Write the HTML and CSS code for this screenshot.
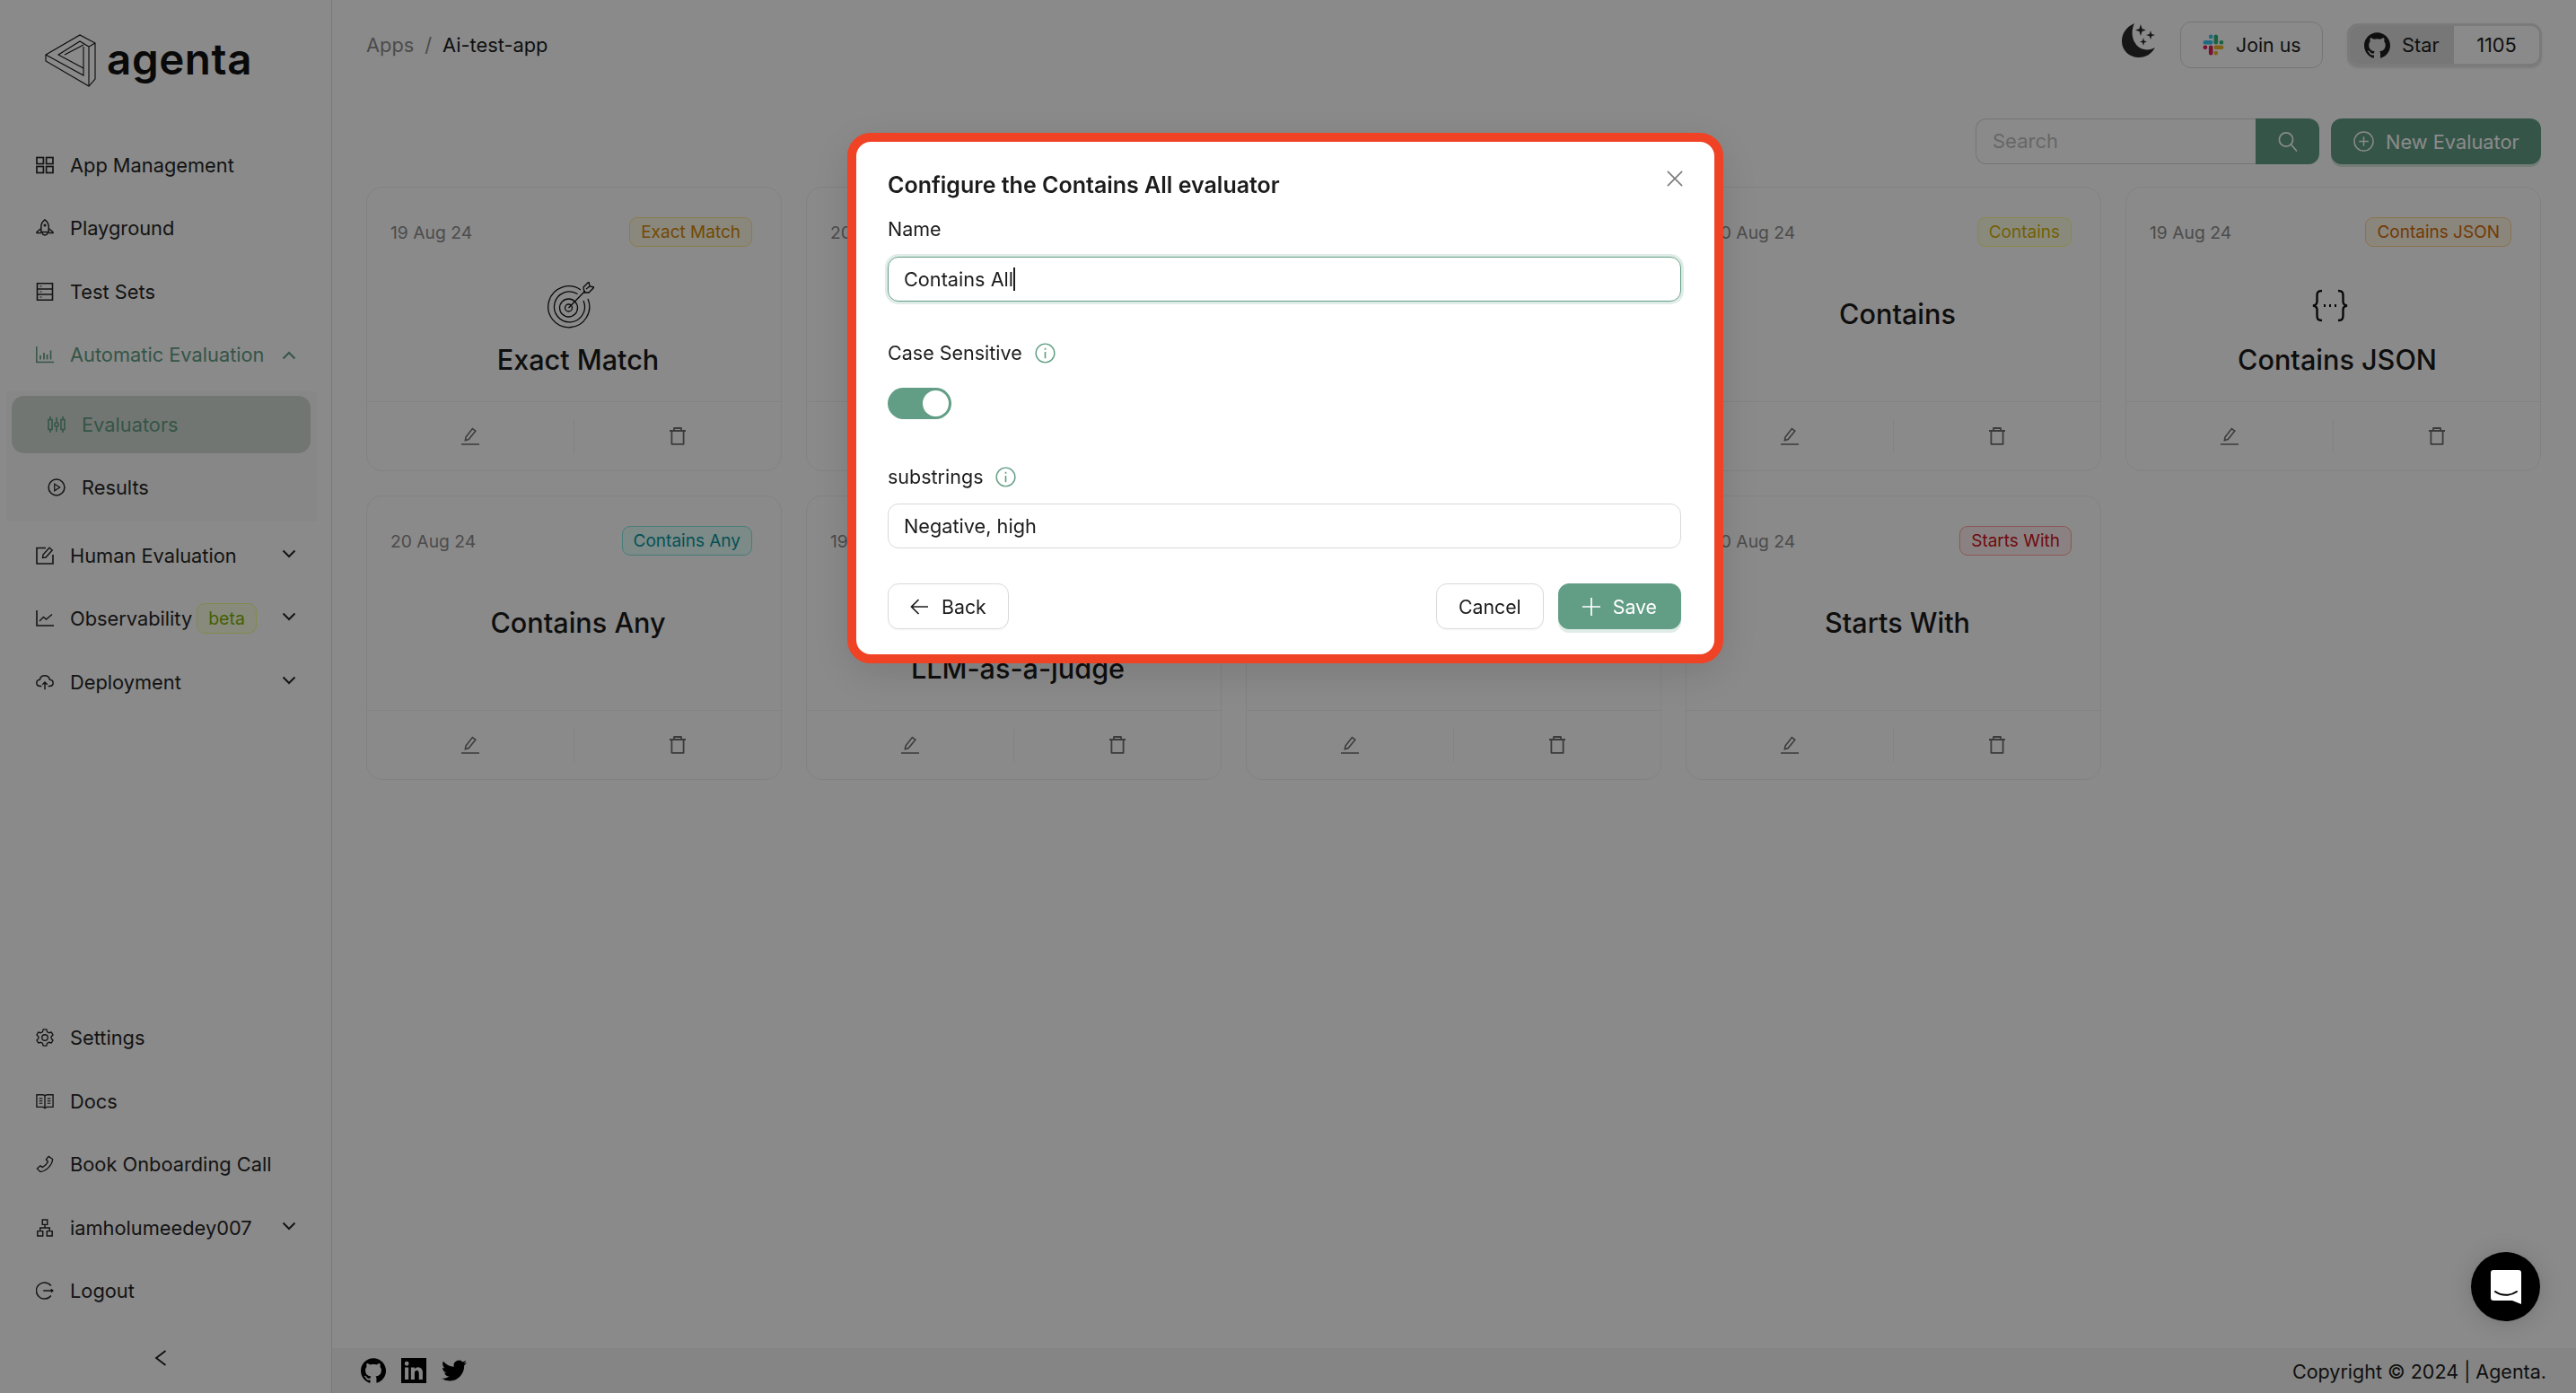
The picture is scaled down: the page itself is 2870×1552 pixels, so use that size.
FILE: index.html
```html
<!DOCTYPE html>
<html lang="en">

<head>
    <meta charset="UTF-8">
    <title>Evaluators - Agenta</title>
    <link rel="stylesheet" href="styles.css">
</head>

<body>
    <!-- shared icons -->
    <svg class="defs" width="0" height="0">
        <symbol id="i-edit" viewBox="0 0 20 20">
            <path d="M4.4 14.6 L5 11 L12.4 1.6 L15.8 4.2 L8.2 13.6 Z M0 19 H20" fill="none" stroke="currentColor" stroke-width="1.6" />
        </symbol>
        <symbol id="i-trash" viewBox="0 0 20 20">
            <path d="M1 4 H19 M6 4 V1 H14 V4 M3.4 4 V18.8 H16.6 V4" fill="none" stroke="currentColor" stroke-width="1.8" stroke-linejoin="round" />
        </symbol>
        <symbol id="i-down" viewBox="0 0 16 10">
            <path d="M1.5 1.5 L8 8 L14.5 1.5" fill="none" stroke="currentColor" stroke-width="2" />
        </symbol>
        <symbol id="i-info" viewBox="0 0 24 24">
            <circle cx="12" cy="12" r="10.8" fill="none" stroke="currentColor" stroke-width="1.5" />
            <path d="M12 10.5 V18 M12 6 V8" fill="none" stroke="currentColor" stroke-width="1.7" />
        </symbol>
        <symbol id="i-github" viewBox="0 0 24 24">
            <path fill="currentColor" d="M12 .297c-6.63 0-12 5.373-12 12 0 5.303 3.438 9.8 8.205 11.385.6.113.82-.258.82-.577 0-.285-.01-1.04-.015-2.04-3.338.724-4.042-1.61-4.042-1.61C4.422 18.07 3.633 17.7 3.633 17.7c-1.087-.744.084-.729.084-.729 1.205.084 1.838 1.236 1.838 1.236 1.07 1.835 2.809 1.305 3.495.998.108-.776.417-1.305.76-1.605-2.665-.3-5.466-1.332-5.466-5.93 0-1.31.465-2.38 1.235-3.22-.135-.303-.54-1.523.105-3.176 0 0 1.005-.322 3.3 1.23.96-.267 1.98-.399 3-.405 1.02.006 2.04.138 3 .405 2.28-1.552 3.285-1.23 3.285-1.23.645 1.653.24 2.873.12 3.176.765.84 1.23 1.91 1.23 3.22 0 4.61-2.805 5.625-5.475 5.92.42.36.81 1.096.81 2.22 0 1.606-.015 2.896-.015 3.286 0 .315.21.69.825.57C20.565 22.092 24 17.592 24 12.297c0-6.627-5.373-12-12-12" />
        </symbol>
    </svg>

    <div class="app">
        <aside class="sidebar">
            <div class="logo">
                <svg class="logo-mark" viewBox="0 0 58 60" fill="none" stroke="#111" stroke-width="1.1">
                    <path d="M1 23 L39 1 L56 10 V50 L49 58 L1 30 Z" />
                    <path d="M1 23 L43 46 V14 M49 58 V14 L56 10 M49 14 L39 8 L15 23 L43 38 M22 23 L43 12" />
                </svg>
                <span class="logo-text">agenta</span>
            </div>

            <nav class="nav">
                <a class="nav-item">
                    <svg class="nav-icon" viewBox="0 0 20 20" fill="none" stroke="currentColor" stroke-width="1.7">
                        <rect x="1" y="1.5" width="7.4" height="7" />
                        <rect x="11.6" y="1.5" width="7.4" height="7" />
                        <rect x="1" y="11.5" width="7.4" height="7" />
                        <rect x="11.6" y="11.5" width="7.4" height="7" />
                    </svg>
                    App Management
                </a>
                <a class="nav-item">
                    <svg class="nav-icon" viewBox="0 0 20 20" fill="none" stroke="currentColor" stroke-width="1.5">
                        <path d="M10 .8 C13 3 14.2 5.5 14.2 8.5 V14.5 H5.8 V8.5 C5.8 5.5 7 3 10 .8 Z" />
                        <path d="M5.8 10.5 L1 14.5 V15.5 H5.8 M14.2 10.5 L19 14.5 V15.5 H14.2 M7 14.5 C7 19 13 19 13 14.5" />
                        <circle cx="10" cy="7" r=".8" fill="currentColor" />
                    </svg>
                    Playground
                </a>
                <a class="nav-item">
                    <svg class="nav-icon" viewBox="0 0 20 20" fill="none" stroke="currentColor" stroke-width="1.6">
                        <path d="M1.5 .8 H18.5 V19.2 H1.5 Z M1.5 7 H18.5 M1.5 13 H18.5" />
                        <path d="M4.5 4 H6.5 M4.5 10 H6.5 M4.5 16 H6.5" stroke-width="1.2" />
                    </svg>
                    Test Sets
                </a>
                <a class="nav-item nav-item-active">
                    <svg class="nav-icon" viewBox="0 0 20 20" fill="none" stroke="currentColor" stroke-width="1.5">
                        <path d="M.8 1 V18.6 H20" />
                        <path d="M5 11 V15.5 M9 8 V15.5 M12.5 10 V15.5 M16.5 5.5 V15.5" stroke-width="1.7" />
                    </svg>
                    Automatic Evaluation
                    <svg class="nav-arrow nav-arrow-up"><use href="#i-down" /></svg>
                </a>
                <div class="subnav">
                    <a class="nav-item subnav-selected">
                        <svg class="nav-icon" viewBox="0 0 20 20" fill="none" stroke="currentColor" stroke-width="1.6">
                            <path d="M1 4.5 H5 V15.5 H1 Z M3 1 V4.5 M3 15.5 V19" />
                            <circle cx="10" cy="10" r="2.2" />
                            <path d="M10 2 V7.8 M10 12.2 V18" />
                            <path d="M15 4.5 H19 V15.5 H15 Z M17 1 V4.5 M17 15.5 V19" />
                        </svg>
                        Evaluators
                    </a>
                    <a class="nav-item">
                        <svg class="nav-icon" viewBox="0 0 22 22" fill="none" stroke="currentColor" stroke-width="1.7">
                            <circle cx="11" cy="11" r="9.8" />
                            <path d="M8.5 6.8 L15 11 L8.5 15.2 Z" stroke-width="1.4" />
                        </svg>
                        Results
                    </a>
                </div>
                <a class="nav-item">
                    <svg class="nav-icon" viewBox="0 0 20 20" fill="none" stroke="currentColor" stroke-width="1.6">
                        <path d="M11 1.5 H1 V19 H19 V9" />
                        <path d="M7.5 12.5 L8 9 L15 1.2 L18.2 4 L11 12 Z" stroke-width="1.4" />
                    </svg>
                    Human Evaluation
                    <svg class="nav-arrow"><use href="#i-down" /></svg>
                </a>
                <a class="nav-item">
                    <svg class="nav-icon" viewBox="0 0 20 20" fill="none" stroke="currentColor" stroke-width="1.6">
                        <path d="M1 1 V18 H20" />
                        <path d="M4 13 L8.5 8.5 L11.5 11 L18 5.5" stroke-width="1.4" />
                    </svg>
                    Observability
                    <span class="tag tag-beta">beta</span>
                    <svg class="nav-arrow"><use href="#i-down" /></svg>
                </a>
                <a class="nav-item">
                    <svg class="nav-icon" viewBox="0 0 22 20" fill="none" stroke="currentColor" stroke-width="1.6">
                        <path d="M7 15 H5.5 C-.5 15 -.5 7.5 4.8 7 C6 .5 15.5 .5 17 7 C22.5 7.5 22.5 15 16.5 15 H15" />
                        <path d="M11 19 V10 M8 13 L11 10 L14 13" />
                    </svg>
                    Deployment
                    <svg class="nav-arrow"><use href="#i-down" /></svg>
                </a>
            </nav>

            <nav class="nav nav-bottom">
                <a class="nav-item">
                    <svg class="nav-icon" viewBox="0 0 22 22" fill="none" stroke="currentColor" stroke-width="1.5">
                        <path d="M9 1 H13 L13.8 4 L16 5.2 L19 4.4 L21 7.8 L18.8 10 V12 L21 14.2 L19 17.6 L16 16.8 L13.8 18 L13 21 H9 L8.2 18 L6 16.8 L3 17.6 L1 14.2 L3.2 12 V10 L1 7.8 L3 4.4 L6 5.2 L8.2 4 Z" stroke-linejoin="round" />
                        <circle cx="11" cy="11" r="3.6" />
                    </svg>
                    Settings
                </a>
                <a class="nav-item">
                    <svg class="nav-icon" viewBox="0 0 22 20" fill="none" stroke="currentColor" stroke-width="1.5">
                        <path d="M1 2 H8 C9.5 2 11 3 11 4 C11 3 12.5 2 14 2 H21 V17 H13 L11 18.5 L9 17 H1 Z M11 4 V18" />
                        <path d="M4 6.5 H8 M4 9.5 H8 M4 12.5 H8 M14 6.5 H18 M14 9.5 H18 M14 12.5 H18" stroke-width="1.3" />
                    </svg>
                    Docs
                </a>
                <a class="nav-item">
                    <svg class="nav-icon" viewBox="0 0 22 22" fill="none" stroke="currentColor" stroke-width="1.5">
                        <path d="M15.5 1.5 L20.5 5 C20 12 13 19.5 5.5 20.5 L1.5 16.5 L5.5 13 L8 15 C11 13.5 13.5 11 14.8 8 L12.5 5.5 Z" stroke-linejoin="round" />
                    </svg>
                    Book Onboarding Call
                </a>
                <a class="nav-item">
                    <svg class="nav-icon" viewBox="0 0 20 22" fill="none" stroke="currentColor" stroke-width="1.6">
                        <path d="M7 1 H13 V7 H7 Z M1 15 H7.5 V21 H1 Z M12.5 15 H19 V21 H12.5 Z M10 7 V11 M4.2 15 V11 H15.8 V15" />
                    </svg>
                    iamholumeedey007
                    <svg class="nav-arrow"><use href="#i-down" /></svg>
                </a>
                <a class="nav-item">
                    <svg class="nav-icon" viewBox="0 0 22 22" fill="none" stroke="currentColor" stroke-width="1.6">
                        <path d="M18.5 5 A10 10 0 1 0 18.5 17" />
                        <path d="M9 11 H21 M18.5 9 L21 11 L18.5 13" stroke-width="1.4" />
                    </svg>
                    Logout
                </a>
            </nav>

            <div class="collapse">
                <svg width="14" height="18" viewBox="0 0 14 18" fill="none" stroke="#1a1a1a" stroke-width="1.8">
                    <path d="M12.5 1 L2 9 L12.5 17" />
                </svg>
            </div>
        </aside>

        <div class="main">
            <header class="topbar">
                <div class="breadcrumb">
                    <span class="crumb-muted">Apps</span>
                    <span class="crumb-muted">/</span>
                    <span>Ai-test-app</span>
                </div>
                <div class="topbar-right">
                    <svg class="moon" viewBox="0 0 38 38">
                        <path fill="#2a2a2a" d="M14 0 C5 4 0 11 0 20 C0 30 8 38 19 38 C27 38 33 34 37 27 C33 29 29 30 25 29 C14 27 8 13 14 0 Z" />
                        <path fill="#2a2a2a" d="M21 1 L22.5 6 L27 7.5 L22.5 9 L21 14 L19.5 9 L15 7.5 L19.5 6 Z M32 8 L33.2 12 L37 13 L33.2 14.2 L32 18 L30.8 14.2 L27 13 L30.8 12 Z M24 16 L25 19.5 L28 20.5 L25 21.5 L24 25 L23 21.5 L20 20.5 L23 19.5 Z" />
                    </svg>
                    <a class="btn-join">
                        <svg class="slack" viewBox="0 0 24 24" fill="none" stroke-width="4.6" stroke-linecap="round">
                            <path d="M14.8 2.8 V9.2 M20.8 9.2 H21" stroke="#2eb67d" />
                            <path d="M14.8 14.8 H21.2 M14.8 21 V21.2" stroke="#ecb22e" />
                            <path d="M9.2 14.8 V21.2 M3 14.8 H2.8" stroke="#e01e5a" />
                            <path d="M2.8 9.2 H9.2 M9.2 3 V2.8" stroke="#36c5f0" />
                        </svg>
                        Join us
                    </a>
                    <div class="btn-star">
                        <span class="star-left">
                            <svg class="star-icon"><use href="#i-github" /></svg>
                            Star
                        </span>
                        <span class="star-count">1105</span>
                    </div>
                </div>
            </header>

            <div class="content">
                <div class="toolbar">
                    <div class="search">
                        <span class="search-input">Search</span>
                        <span class="search-btn">
                            <svg width="22" height="24" viewBox="0 0 22 24" fill="none" stroke="currentColor" stroke-width="1.7">
                                <circle cx="9" cy="9.5" r="7.6" />
                                <path d="M14.5 15 L21 22.5" />
                            </svg>
                        </span>
                    </div>
                    <a class="btn-new">
                        <svg width="23" height="23" viewBox="0 0 24 24" fill="none" stroke="currentColor" stroke-width="1.5">
                            <circle cx="12" cy="12" r="11" />
                            <path d="M12 6.5 V17.5 M6.5 12 H17.5" />
                        </svg>
                        New Evaluator
                    </a>
                </div>

                <div class="cards">
                    <div class="card">
                        <div class="card-body">
                            <div class="card-head">
                                <span class="card-date">19 Aug 24</span>
                                <span class="tag tag-gold">Exact Match</span>
                            </div>
                            <div class="card-main">
                                <svg class="card-icon" viewBox="0 0 52 52" fill="none" stroke="#111" stroke-width="1.3">
                                    <path d="M37 9 A23 23 0 1 0 45 19" />
                                    <path d="M33.5 13.5 A17 17 0 1 0 40 21" />
                                    <circle cx="23.5" cy="29" r="10" />
                                    <circle cx="23.5" cy="29" r="4" />
                                    <path d="M23.5 29 L42 10 M40 6 L46 0 L47 5 L52 6 L46 12 L41 12 Z M43 8 L47 5" />
                                </svg>
                                <div class="card-title">Exact Match</div>
                            </div>
                        </div>
                        <div class="card-foot">
                            <span class="card-action"><svg class="i-act"><use href="#i-edit" /></svg></span>
                            <span class="card-action"><svg class="i-act"><use href="#i-trash" /></svg></span>
                        </div>
                    </div>

                    <div class="card">
                        <div class="card-body">
                            <div class="card-head">
                                <span class="card-date">20 Aug 24</span>
                            </div>
                        </div>
                        <div class="card-foot">
                            <span class="card-action"><svg class="i-act"><use href="#i-edit" /></svg></span>
                            <span class="card-action"><svg class="i-act"><use href="#i-trash" /></svg></span>
                        </div>
                    </div>

                    <div class="card">
                        <div class="card-body"></div>
                        <div class="card-foot">
                            <span class="card-action"><svg class="i-act"><use href="#i-edit" /></svg></span>
                            <span class="card-action"><svg class="i-act"><use href="#i-trash" /></svg></span>
                        </div>
                    </div>

                    <div class="card">
                        <div class="card-body">
                            <div class="card-head">
                                <span class="card-date">20 Aug 24</span>
                                <span class="tag tag-yellow">Contains</span>
                            </div>
                            <div class="card-main card-main-plain">
                                <div class="card-title">Contains</div>
                            </div>
                        </div>
                        <div class="card-foot">
                            <span class="card-action"><svg class="i-act"><use href="#i-edit" /></svg></span>
                            <span class="card-action"><svg class="i-act"><use href="#i-trash" /></svg></span>
                        </div>
                    </div>

                    <div class="card">
                        <div class="card-body">
                            <div class="card-head">
                                <span class="card-date">19 Aug 24</span>
                                <span class="tag tag-orange">Contains JSON</span>
                            </div>
                            <div class="card-main">
                                <svg class="card-icon" viewBox="0 0 52 52" fill="none" stroke="#111" stroke-width="2.4">
                                    <path d="M17 10 C12 10 11.5 12 11.5 16 V22 C11.5 25 10 26 7 26.5 C10 27 11.5 28 11.5 31 V37 C11.5 41 12 43 17 43" />
                                    <path d="M35 10 C40 10 40.5 12 40.5 16 V22 C40.5 25 42 26 45 26.5 C42 27 40.5 28 40.5 31 V37 C40.5 41 40 43 35 43" />
                                    <path d="M19 26.5 H21 M25 26.5 H27 M31 26.5 H33" stroke-width="3.2" />
                                </svg>
                                <div class="card-title">Contains JSON</div>
                            </div>
                        </div>
                        <div class="card-foot">
                            <span class="card-action"><svg class="i-act"><use href="#i-edit" /></svg></span>
                            <span class="card-action"><svg class="i-act"><use href="#i-trash" /></svg></span>
                        </div>
                    </div>

                    <div class="card">
                        <div class="card-body">
                            <div class="card-head">
                                <span class="card-date">20 Aug 24</span>
                                <span class="tag tag-cyan">Contains Any</span>
                            </div>
                            <div class="card-main card-main-plain">
                                <div class="card-title">Contains Any</div>
                            </div>
                        </div>
                        <div class="card-foot">
                            <span class="card-action"><svg class="i-act"><use href="#i-edit" /></svg></span>
                            <span class="card-action"><svg class="i-act"><use href="#i-trash" /></svg></span>
                        </div>
                    </div>

                    <div class="card">
                        <div class="card-body">
                            <div class="card-head">
                                <span class="card-date">19 Aug 24</span>
                            </div>
                            <div class="card-main">
                                <div class="card-icon"></div>
                                <div class="card-title">LLM-as-a-judge</div>
                            </div>
                        </div>
                        <div class="card-foot">
                            <span class="card-action"><svg class="i-act"><use href="#i-edit" /></svg></span>
                            <span class="card-action"><svg class="i-act"><use href="#i-trash" /></svg></span>
                        </div>
                    </div>

                    <div class="card">
                        <div class="card-body"></div>
                        <div class="card-foot">
                            <span class="card-action"><svg class="i-act"><use href="#i-edit" /></svg></span>
                            <span class="card-action"><svg class="i-act"><use href="#i-trash" /></svg></span>
                        </div>
                    </div>

                    <div class="card">
                        <div class="card-body">
                            <div class="card-head">
                                <span class="card-date">20 Aug 24</span>
                                <span class="tag tag-red">Starts With</span>
                            </div>
                            <div class="card-main card-main-plain">
                                <div class="card-title">Starts With</div>
                            </div>
                        </div>
                        <div class="card-foot">
                            <span class="card-action"><svg class="i-act"><use href="#i-edit" /></svg></span>
                            <span class="card-action"><svg class="i-act"><use href="#i-trash" /></svg></span>
                        </div>
                    </div>
                </div>
            </div>

            <footer class="footer">
                <div class="footer-icons">
                    <svg class="social"><use href="#i-github" /></svg>
                    <svg class="social" viewBox="0 0 24 24">
                        <path fill="currentColor" d="M0 0 H24 V24 H0 Z M3.5 9 V20.5 H7 V9 Z M5.3 3.3 A2 2 0 1 0 5.3 7.4 A2 2 0 1 0 5.3 3.3 Z M9.3 9 V20.5 H12.8 V14.5 C12.8 11 16.9 11 16.9 14.5 V20.5 H20.5 V13.8 C20.5 8.2 14.6 7.6 12.8 10.6 V9 Z" fill-rule="evenodd" />
                    </svg>
                    <svg class="social" viewBox="0 0 24 24">
                        <path fill="currentColor" d="M23.953 4.57a10 10 0 01-2.825.775 4.958 4.958 0 002.163-2.723c-.951.555-2.005.959-3.127 1.184a4.92 4.92 0 00-8.384 4.482C7.69 8.095 4.067 6.13 1.64 3.162a4.822 4.822 0 00-.666 2.475c0 1.71.87 3.213 2.188 4.096a4.904 4.904 0 01-2.228-.616v.06a4.923 4.923 0 003.946 4.827 4.996 4.996 0 01-2.212.085 4.936 4.936 0 004.604 3.417 9.867 9.867 0 01-6.102 2.105c-.39 0-.779-.023-1.17-.067a13.995 13.995 0 007.557 2.209c9.053 0 13.998-7.496 13.998-13.985 0-.21 0-.42-.015-.63A9.935 9.935 0 0024 4.59z" />
                    </svg>
                </div>
                <span class="copyright">Copyright © 2024 | Agenta.</span>
            </footer>
        </div>
    </div>

    <!-- dimmed layer with the dialog -->
    <div class="overlay">
        <div class="modal">
            <svg class="modal-close" viewBox="0 0 20 20" fill="none" stroke="#777" stroke-width="1.7">
                <path d="M1 1 L19 19 M19 1 L1 19" />
            </svg>
            <div class="modal-title">Configure the Contains All evaluator</div>

            <label class="field-label field-label-first">Name</label>
            <div class="input input-focus">Contains All<span class="caret"></span></div>

            <label class="field-label field-label-gap">
                Case Sensitive
                <svg class="i-info"><use href="#i-info" /></svg>
            </label>
            <div class="switch"><span class="switch-knob"></span></div>

            <label class="field-label field-label-wide">
                substrings
                <svg class="i-info"><use href="#i-info" /></svg>
            </label>
            <div class="input">Negative, high</div>

            <div class="modal-foot">
                <button class="btn">
                    <svg width="20" height="20" viewBox="0 0 20 20" fill="none" stroke="currentColor" stroke-width="1.7">
                        <path d="M20 10 H1.5 M9.5 2 L1.5 10 L9.5 18" />
                    </svg>
                    Back
                </button>
                <div class="modal-actions">
                    <button class="btn">Cancel</button>
                    <button class="btn btn-primary">
                        <svg width="20" height="20" viewBox="0 0 20 20" fill="none" stroke="currentColor" stroke-width="1.7">
                            <path d="M10 0 V20 M0 10 H20" />
                        </svg>
                        Save
                    </button>
                </div>
            </div>
        </div>
    </div>

    <div class="chat">
        <svg width="34" height="38" viewBox="0 0 34 38">
            <path fill="#fff" d="M3 0 H31 A3 3 0 0 1 34 3 V38 L24 34 H3 A3 3 0 0 1 0 31 V3 A3 3 0 0 1 3 0 Z" />
            <path d="M5 24 C12 29 22 29 29 24" fill="none" stroke="#000" stroke-width="2" stroke-linecap="round" />
        </svg>
    </div>
</body>

</html>
```

FILE: styles.css
```css
* {
    box-sizing: border-box;
}

html,
body {
    height: 100%;
}

body {
    margin: 0;
    background-color: #ffffff;
    color: #1c1c1c;
    font-family: "Inter", "Liberation Sans", sans-serif;
    font-size: 21.8px;
    overflow: hidden;
}

.defs {
    position: absolute;
}

.app {
    display: flex;
    height: 100vh;
}

/* sidebar */
.sidebar {
    display: flex;
    flex-direction: column;
    width: 370px;
    flex-shrink: 0;
    border-right: 1px solid #e4e4e4;
}

.logo {
    display: flex;
    align-items: flex-start;
    gap: 11px;
    height: 152px;
    padding: 36px 0 0 50px;
}

.logo-mark {
    width: 58px;
    height: 60px;
    margin-top: 2px;
}

.logo-text {
    font-size: 47.5px;
    font-weight: 600;
    line-height: 60px;
    color: #111111;
    letter-spacing: 0.6px;
}

.nav {
    display: flex;
    flex-direction: column;
    gap: 6.4px;
}

.nav-bottom {
    margin-top: auto;
}

.nav-item {
    display: flex;
    align-items: center;
    height: 64px;
    padding-left: 40px;
    position: relative;
    color: #262626;
    white-space: nowrap;
}

.nav-icon {
    width: 20px;
    height: 20px;
    margin-right: 18px;
    flex-shrink: 0;
}

.nav-arrow {
    position: absolute;
    left: 314px;
    top: 25px;
    width: 16px;
    height: 10px;
    color: #262626;
}

.nav-arrow-up {
    transform: rotate(180deg);
    top: 28px;
}

.nav-item-active,
.nav-item-active .nav-arrow {
    color: #629e85;
}

.subnav {
    display: flex;
    flex-direction: column;
    gap: 6px;
    margin: 2px 16px 0 7px;
    padding: 5px 7px 6px 6px;
    background-color: #f9faf9;
}

.subnav .nav-item {
    padding-left: 40px;
    border-radius: 14px;
}

.subnav-selected {
    background-color: #d2dbd3;
    color: #629e85;
}

/* tags */
.tag {
    display: inline-flex;
    align-items: center;
    height: 33px;
    padding: 0 12px;
    border: 1px solid;
    border-radius: 9px;
    font-size: 19px;
    white-space: nowrap;
}

.tag-beta {
    margin-left: 5px;
    height: 34px;
    font-size: 19.5px;
    background-color: #fcffe6;
    border-color: #eaff8f;
    color: #7cb305;
}

.tag-gold {
    background-color: #fffbe6;
    border-color: #ffe58f;
    color: #d48806;
}

.tag-yellow {
    background-color: #feffe6;
    border-color: #fffb8f;
    color: #d4b106;
}

.tag-orange {
    background-color: #fff7e6;
    border-color: #ffd591;
    color: #d46b08;
}

.tag-cyan {
    background-color: #e6fffb;
    border-color: #87e8de;
    color: #08979c;
}

.tag-red {
    background-color: #fff1f0;
    border-color: #ffa39e;
    color: #cf1322;
}

.collapse {
    display: flex;
    justify-content: center;
    padding-top: 34px;
    height: 82px;
    padding-right: 11px;
}

/* main area */
.main {
    display: flex;
    flex-direction: column;
    flex: 1;
    min-width: 0;
}

.topbar {
    display: flex;
    align-items: center;
    justify-content: space-between;
    padding: 24px 38px 0;
    height: 76px;
}

.breadcrumb {
    display: flex;
    gap: 12px;
    font-size: 21.8px;
}

.crumb-muted {
    color: #8c8c8c;
}

.topbar-right {
    display: flex;
    align-items: center;
}

.moon {
    width: 38px;
    height: 38px;
    margin: -10px 27px 0 0;
}

.btn-join {
    display: flex;
    align-items: center;
    gap: 13px;
    width: 159px;
    height: 52px;
    padding-left: 24px;
    border: 1px solid #d9d9d9;
    border-radius: 12px;
    margin-right: 27px;
    font-size: 21.3px;
}

.slack {
    width: 24px;
    height: 24px;
}

.btn-star {
    display: flex;
    width: 217px;
    height: 48px;
    border: 3px solid #e2e2e2;
    border-radius: 12px;
    overflow: hidden;
    box-shadow: 0 2px 2px rgba(0, 0, 0, 0.1);
}

.star-left {
    display: flex;
    align-items: center;
    gap: 13px;
    width: 116px;
    padding-left: 16px;
    background-color: #dcdcdc;
}

.star-icon {
    width: 29px;
    height: 29px;
}

.star-count {
    flex: 1;
    text-align: center;
    line-height: 42px;
}

.content {
    flex: 1;
    padding: 56px 39px 0 38px;
}

.toolbar {
    display: flex;
    justify-content: flex-end;
    gap: 13px;
    height: 51px;
    margin-bottom: 25px;
}

.search {
    display: flex;
    width: 383px;
}

.search-input {
    flex: 1;
    padding-left: 18px;
    border: 1px solid #d9d9d9;
    border-right: none;
    border-radius: 12px 0 0 12px;
    line-height: 49px;
    font-size: 22px;
    color: #bfbfbf;
}

.search-btn {
    display: flex;
    align-items: center;
    justify-content: center;
    width: 71px;
    background-color: #629e85;
    border-radius: 0 12px 12px 0;
    color: #ffffff;
}

.btn-new {
    display: flex;
    align-items: center;
    gap: 13px;
    width: 234px;
    padding-left: 25px;
    background-color: #629e85;
    border-radius: 12px;
    color: #ffffff;
    box-shadow: 0 3px 0 rgba(98, 158, 133, 0.25);
    white-space: nowrap;
}

/* evaluator cards */
.cards {
    display: grid;
    grid-template-columns: repeat(5, 463px);
    grid-auto-rows: 317px;
    gap: 27px;
}

.card {
    display: flex;
    flex-direction: column;
    border: 1px solid #f0f0f0;
    border-radius: 18px;
}

.card-body {
    flex: 1;
    min-height: 0;
    padding: 33px 32px 0 26px;
}

.card-head {
    display: flex;
    align-items: center;
    justify-content: space-between;
    height: 33px;
}

.card-date {
    font-size: 19.3px;
    color: #8c8c8c;
}

.card-main {
    display: flex;
    flex-direction: column;
    align-items: center;
    padding: 39px 0 0 0;
    margin-left: 15px;
}

.card-main-plain {
    padding-top: 55px;
}

.card-icon {
    width: 52px;
    height: 52px;
    margin-bottom: 15px;
    margin-right: 16px;
}

.card-title {
    font-size: 30.6px;
    font-weight: 450;
    line-height: 40px;
    color: #1a1a1a;
}

.card-foot {
    display: flex;
    align-items: center;
    height: 77px;
    border-top: 1px solid #f0f0f0;
}

.card-action {
    display: flex;
    align-items: center;
    justify-content: center;
    flex: 1;
    height: 37px;
    color: #6e6e6e;
}

.card-action + .card-action {
    border-left: 1px solid #f0f0f0;
}

.i-act {
    width: 20px;
    height: 20px;
}

.footer {
    display: flex;
    align-items: center;
    justify-content: space-between;
    height: 50px;
    padding: 0 33px 0 32px;
    background-color: #f5f5f5;
}

.footer-icons {
    display: flex;
    gap: 17px;
    color: #000000;
}

.social {
    width: 28px;
    height: 28px;
}

.copyright {
    font-size: 21.5px;
    padding-top: 2px;
}

/* dialog */
.overlay {
    position: fixed;
    inset: 0;
    display: flex;
    justify-content: center;
    align-items: flex-start;
    padding: 148px 6px 0 0;
    background-color: rgba(0, 0, 0, 0.46);
}

.modal {
    position: relative;
    width: 976px;
    padding: 32px 37px 28px 35px;
    background-color: #ffffff;
    border: 10px solid #f04225;
    border-radius: 26px;
    box-shadow: 0 12px 48px rgba(0, 0, 0, 0.12);
}

.modal-close {
    position: absolute;
    top: 32px;
    right: 34px;
    width: 20px;
    height: 18px;
}

.modal-title {
    font-size: 25px;
    font-weight: 600;
    line-height: 32px;
    color: #1c1c1c;
}

.field-label {
    display: flex;
    align-items: center;
    gap: 14px;
    height: 30px;
    font-size: 21.5px;
    color: #1c1c1c;
}

.field-label-first {
    margin: 18px 0 16px;
}

.field-label-gap {
    margin: 42px 0 24px;
}

.field-label-wide {
    margin: 49px 0 15px;
}

.i-info {
    width: 23px;
    height: 23px;
    color: #629e85;
}

.input {
    display: flex;
    align-items: center;
    height: 50px;
    padding: 0 17px;
    border: 1px solid #d9d9d9;
    border-radius: 12px;
    font-size: 21.7px;
    color: #1c1c1c;
}

.input-focus {
    border-color: #629e85;
    box-shadow: 0 0 0 3px rgba(98, 158, 133, 0.2);
}

.caret {
    width: 2px;
    height: 26px;
    background-color: #1c1c1c;
}

.switch {
    display: flex;
    align-items: center;
    justify-content: flex-end;
    width: 71px;
    height: 35px;
    padding-right: 3px;
    border-radius: 18px;
    background-color: #629e85;
}

.switch-knob {
    width: 29px;
    height: 29px;
    border-radius: 50%;
    background-color: #ffffff;
}

.modal-foot {
    display: flex;
    justify-content: space-between;
    margin-top: 39px;
}

.modal-actions {
    display: flex;
    gap: 16px;
}

.btn {
    display: flex;
    align-items: center;
    gap: 15px;
    height: 51px;
    padding: 0 24px;
    background-color: #ffffff;
    border: 1px solid #d9d9d9;
    border-radius: 12px;
    box-shadow: 0 2px 0 rgba(0, 0, 0, 0.02);
    font-family: inherit;
    font-size: 21.3px;
    color: #1c1c1c;
}

.btn-primary {
    gap: 14px;
    padding: 0 26px;
    background-color: #629e85;
    border-color: #629e85;
    color: #ffffff;
    box-shadow: 0 4px 0 rgba(98, 158, 133, 0.2);
}

.chat {
    position: fixed;
    left: 2753px;
    top: 1395px;
    display: flex;
    align-items: center;
    justify-content: center;
    width: 77px;
    height: 77px;
    border-radius: 50%;
    background-color: #000000;
    box-shadow: 0 1px 6px rgba(0, 0, 0, 0.06), 0 2px 32px rgba(0, 0, 0, 0.16);
}
```
